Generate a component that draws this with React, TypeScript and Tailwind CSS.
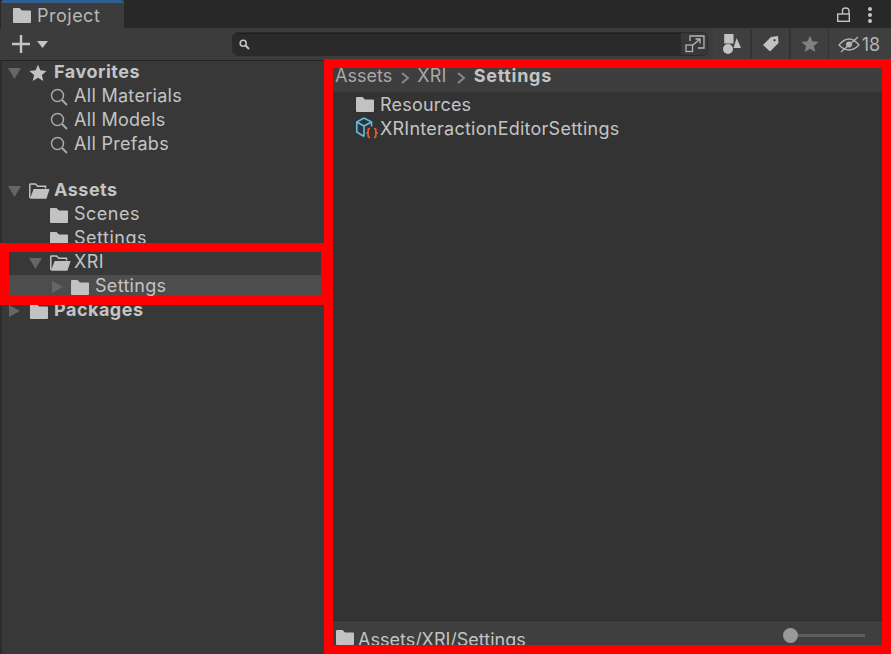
import { FC, ReactNode } from "react";

const Folder: FC<{ className?: string }> = ({ className = "" }) => (
  <svg viewBox="0 0 18 15" width="18" height="15" className={className}>
    <path d="M0 1 Q0 0 1 0 H6.5 L9 2.5 H17 Q18 2.5 18 3.5 V14 Q18 15 17 15 H1 Q0 15 0 14 Z" fill="#c2c2c2" />
  </svg>
);

const FolderOpen: FC<{ className?: string }> = ({ className = "" }) => (
  <svg viewBox="0 0 21 16" width="21" height="16" className={className}>
    <path d="M.8 15 V1.6 Q.8 1 1.4 1 H6.5 L8.8 3.2 H16.5 V5.5" fill="none" stroke="#c2c2c2" strokeWidth="1.5" />
    <path d="M1 15.8 L4.6 6 H20.6 L17.4 15.8 Z" fill="#c2c2c2" />
  </svg>
);

const Lens: FC = () => (
  <svg viewBox="0 0 18 18" width="18" height="18">
    <circle cx="7.5" cy="7.5" r="6" fill="none" stroke="#a8a8a8" strokeWidth="1.5" />
    <path d="M12 12 L17 17" stroke="#a8a8a8" strokeWidth="2" />
  </svg>
);

const Tri: FC<{ open?: boolean }> = ({ open }) => (
  <svg viewBox="0 0 13 12" width="13" height="12" className="shrink-0">
    {open ? <path d="M0 1 H13 L6.5 12 Z" fill="#666666" /> : <path d="M1 0 L12 6 L1 12 Z" fill="#666666" />}
  </svg>
);

const Star: FC<{ fill: string; size: number }> = ({ fill, size }) => (
  <svg viewBox="0 0 24 24" width={size} height={size}>
    <path d="M12 1 L15.2 8.4 L23.4 9.2 L17.2 14.6 L19 22.6 L12 18.4 L5 22.6 L6.8 14.6 L.6 9.2 L8.8 8.4 Z" fill={fill} />
  </svg>
);

const Row: FC<{ pad: string; children: ReactNode; bg?: string }> = ({ pad, children, bg = "" }) => (
  <div className={`flex h-6 items-center ${pad} ${bg}`}>{children}</div>
);

const Chevron: FC<{ className: string }> = ({ className }) => (
  <svg viewBox="0 0 9 12" width="9" height="12" className={className}>
    <path d="M1 1 L7 6 L1 11" fill="none" stroke="#8a8a8a" strokeWidth="2" />
  </svg>
);

const App: FC = () => {
  return (
    <div
      className="relative flex h-[654px] w-[891px] flex-col overflow-hidden bg-[#383838] text-[18px] text-[#c4c4c4]"
      style={{ fontFamily: "Inter, 'Liberation Sans', sans-serif" }}
    >
      {/* tab strip */}
      <div className="flex h-7 shrink-0 items-stretch justify-between bg-[#282828]">
        <div className="ml-px flex w-[123px] items-center gap-[6px] rounded-t-[3px] border-t-[3px] border-[#2f5f8f] bg-[#3c3c3c] pl-3">
          <Folder />
          <span className="tracking-[0.5px] text-[#b8b8b8]">Project</span>
        </div>
        <div className="flex items-center gap-[18px] pr-[19px] pt-px">
          <svg viewBox="0 0 13 15" width="13" height="15">
            <path d="M5.5 7 V3.5 Q5.5 1 8.5 1 Q12 1 12 4 V7" fill="none" stroke="#c4c4c4" strokeWidth="1.4" />
            <rect x=".7" y="7" width="11.6" height="7.3" fill="none" stroke="#c4c4c4" strokeWidth="1.4" />
          </svg>
          <div className="flex flex-col gap-[2px]">
            <span className="size-[4px] rounded-full bg-[#c4c4c4]" />
            <span className="size-[4px] rounded-full bg-[#c4c4c4]" />
            <span className="size-[4px] rounded-full bg-[#c4c4c4]" />
          </div>
        </div>
      </div>

      {/* toolbar */}
      <div className="flex h-[33px] shrink-0 items-center border-b border-[#232323] bg-[#3c3c3c]">
        <div className="ml-3 flex w-[220px] shrink-0 items-center gap-[7px]">
          <svg viewBox="0 0 18 18" width="18" height="18">
            <path d="M9 0 V18 M0 9 H18" stroke="#c4c4c4" strokeWidth="2.4" />
          </svg>
          <svg viewBox="0 0 11 7" width="11" height="7">
            <path d="M0 0 H11 L5.5 7 Z" fill="#c4c4c4" />
          </svg>
        </div>
        <div className="flex h-6 w-[476px] shrink-0 items-center rounded-[6px] border border-[#2a2a2a] bg-[#383838]">
          <div className="flex h-full w-[448px] items-center rounded-l-[6px] border-t border-[#1f1f1f] bg-[#2a2a2a] pl-[6px]">
            <svg viewBox="0 0 11 11" width="11" height="11">
              <circle cx="4.2" cy="4.2" r="3" fill="none" stroke="#c4c4c4" strokeWidth="1.6" />
              <path d="M6.5 6.5 L10 10" stroke="#c4c4c4" strokeWidth="2" />
            </svg>
          </div>
          <svg viewBox="0 0 20 18" width="20" height="18" className="ml-[4px]">
            <path d="M5 6 V1 H19 V13 H13" fill="none" stroke="#b4b4b4" strokeWidth="1.3" />
            <path d="M8 10 L15 4 M10.5 4 H15 V8.5" fill="none" stroke="#b4b4b4" strokeWidth="1.3" />
            <rect x="1" y="10" width="6.5" height="6.5" fill="none" stroke="#b4b4b4" strokeWidth="1.3" />
          </svg>
        </div>
        <div className="ml-[5px] flex h-[31px] w-[37px] shrink-0 items-center justify-center bg-[#3f3f3f]">
          <svg viewBox="0 0 18 20" width="18" height="20">
            <rect x="1.2" y="0" width="9.3" height="9.5" fill="#c2c2c2" />
            <path d="M13.6 4 L18 14 H10.5 Z" fill="#c2c2c2" />
            <circle cx="5" cy="15" r="5" fill="#c2c2c2" />
          </svg>
        </div>
        <div className="flex h-[31px] w-[39px] shrink-0 items-center justify-center border-l-2 border-[#333333] bg-[#3f3f3f]">
          <svg viewBox="0 0 16 16" width="16" height="16">
            <path d="M0 9 L8 1 L15 0 L15.5 7 L7 15.5 Z M11.5 3 a1.2 1.2 0 1 0 .01 0 Z" fill="#c2c2c2" fillRule="evenodd" />
          </svg>
        </div>
        <div className="flex h-[31px] w-[39px] shrink-0 items-center justify-center border-l-2 border-[#333333] bg-[#3f3f3f]">
          <Star fill="#808080" size={18} />
        </div>
        <div className="flex h-[31px] flex-1 items-center justify-center gap-[2px] border-l border-[#333333] bg-[#3f3f3f] pr-[2px]">
          <svg viewBox="0 0 22 17" width="22" height="17">
            <path d="M1 9 Q6 3 11 3 Q16 3 21 9 Q16 14 11 14 Q6 14 1 9 Z" fill="none" stroke="#b4b4b4" strokeWidth="1.3" />
            <circle cx="11" cy="8.5" r="3" fill="#b4b4b4" />
            <path d="M3 16 L20 1" stroke="#b4b4b4" strokeWidth="1.3" />
          </svg>
          <span className="text-[#b4b4b4]">18</span>
        </div>
      </div>

      {/* panes */}
      <div className="flex min-h-0 flex-1">
        <div className="w-[325px] shrink-0 border-l-2 border-[#2c2c2c]">
          <Row pad="pl-[6px]">
            <Tri open />
            <span className="ml-[8px]"><Star fill="#c2c2c2" size={18} /></span>
            <span className="ml-[7px] pb-[3px] font-bold tracking-[0.5px]">Favorites</span>
          </Row>
          {["All Materials", "All Models", "All Prefabs"].map((name) => (
            <Row key={name} pad="pl-[48px]">
              <Lens />
              <span className="ml-[6px] pb-[3px] tracking-[0.3px]">{name}</span>
            </Row>
          ))}
          <div className="h-[22px]" />
          <Row pad="pl-[6px]">
            <Tri open />
            <FolderOpen className="ml-[8px]" />
            <span className="ml-[4px] pb-[3px] font-bold tracking-[0.5px]">Assets</span>
          </Row>
          {["Scenes", "Settings"].map((name) => (
            <Row key={name} pad="pl-[48px]">
              <Folder />
              <span className="ml-[6px] pb-[3px] tracking-[0.5px]">{name}</span>
            </Row>
          ))}
          <Row pad="pl-[27px]">
            <Tri open />
            <FolderOpen className="ml-[8px]" />
            <span className="ml-[3px] pb-[3px] tracking-[0.5px]">XRI</span>
          </Row>
          <Row pad="pl-[49px]" bg="bg-[#4d4d4d]">
            <Tri />
            <Folder className="ml-[7px]" />
            <span className="ml-[6px] pb-[3px] tracking-[0.3px]">Settings</span>
          </Row>
          <Row pad="pl-[6px]">
            <Tri />
            <Folder className="ml-[9px]" />
            <span className="ml-[6px] pb-[3px] font-bold tracking-[0.5px]">Packages</span>
          </Row>
        </div>

        <div className="flex min-w-0 flex-1 flex-col bg-[#333333]">
          <div className="flex h-[31px] shrink-0 items-end bg-[#3e3e3e] pb-[3px] pl-[10px]">
            <span className="text-[#a8a8a8]">Assets</span>
            <Chevron className="mb-[5px] ml-[9px] mr-[7px]" />
            <span className="tracking-[0.3px] text-[#a8a8a8]">XRI</span>
            <Chevron className="mb-[5px] ml-[10px] mr-[8px]" />
            <span className="font-bold tracking-[0.7px] text-[#c4c4c4]">Settings</span>
          </div>
          <div className="flex-1 pl-[31px]">
            <div className="flex h-6 items-center">
              <Folder />
              <span className="ml-[6px] tracking-[0.2px]">Resources</span>
            </div>
            <div className="flex h-6 items-center">
              <svg viewBox="0 0 22 22" width="22" height="22">
                <path d="M8 1 L15.5 5 V9.5 M8 1 L.8 5 V15 L8 19.5 M.8 5 L8 9 L15.5 5 M8 9 V19.5" fill="none" stroke="#5ebce6" strokeWidth="1.6" />
                <path d="M14 11.5 Q12.2 11.5 12.2 13 V15 L11 16 L12.2 17 V19 Q12.2 20.5 14 20.5 M18 11.5 Q19.8 11.5 19.8 13 V15 L21 16 L19.8 17 V19 Q19.8 20.5 18 20.5" fill="none" stroke="#e8582c" strokeWidth="1.7" />
              </svg>
              <span className="ml-[2px] tracking-[0.25px]">XRInteractionEditorSettings</span>
            </div>
          </div>
          <div className="flex h-[34px] shrink-0 items-start border-t border-[#2c2c2c] bg-[#3f3f3f] pl-[11px] pt-[5px]">
            <Folder className="mt-[4px]" />
            <span className="ml-[4px]">Assets/XRI/Settings</span>
            <div className="ml-[257px] mt-[2px] flex items-center">
              <span className="size-[15px] rounded-full bg-[#999999]" />
              <span className="h-[3px] w-[67px] bg-[#5e5e5e]" />
            </div>
          </div>
        </div>
      </div>

      {/* red annotation boxes */}
      <div className="absolute left-0 top-[243px] h-[62px] w-[330px] border-[9px] border-[#ff0000]" />
      <div className="absolute left-[324px] top-[59px] h-[595px] w-[567px] border-[9px] border-[#ff0000]" />
    </div>
  );
};

export default App;
